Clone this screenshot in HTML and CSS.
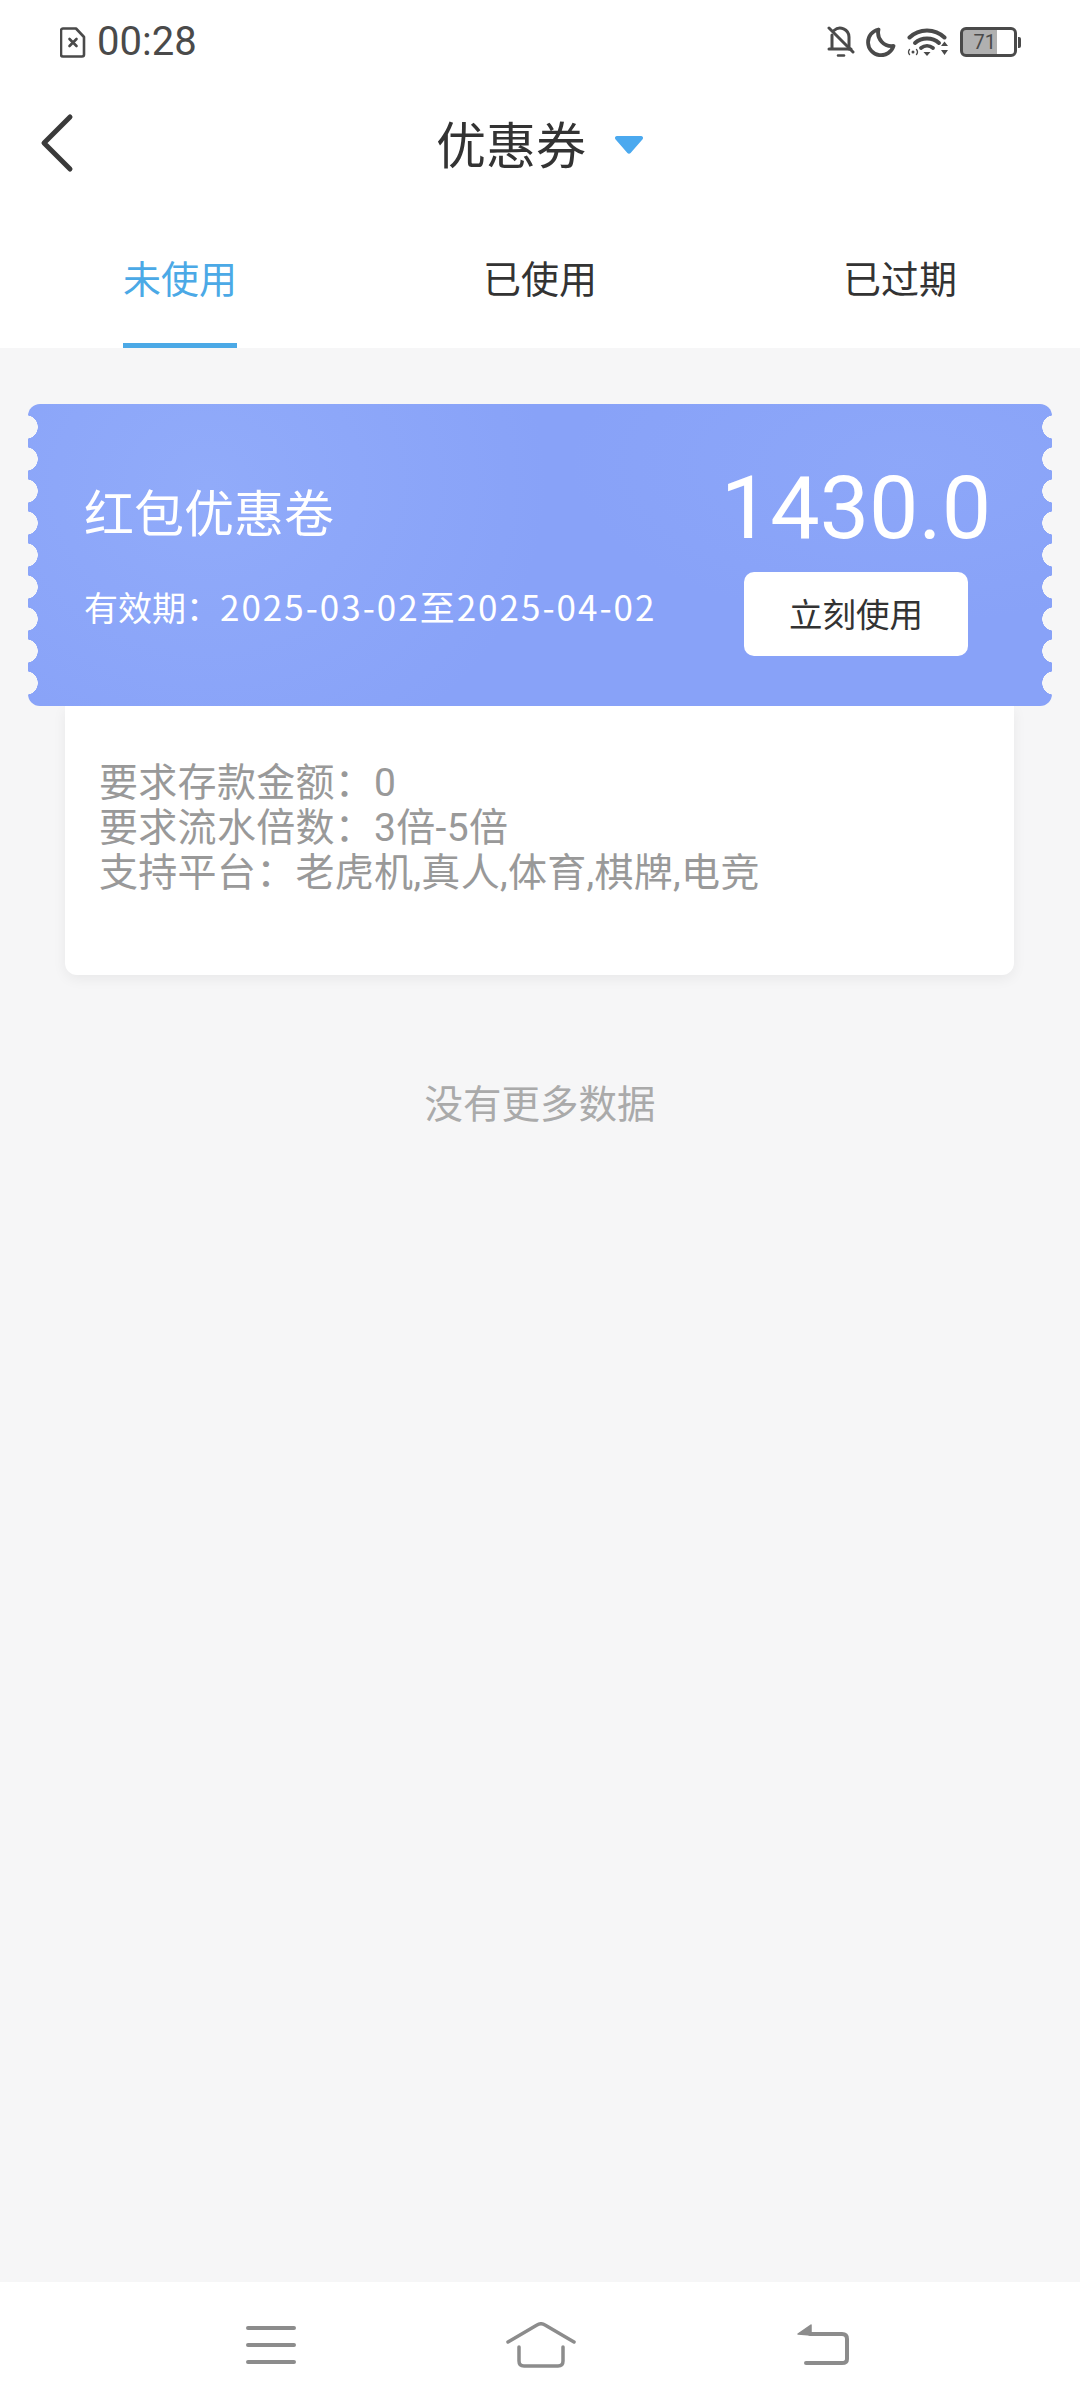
FILE: index.html
```html
<!DOCTYPE html>
<html lang="zh-CN">
<head>
    <meta charset="UTF-8">
    <meta name="viewport" content="width=device-width, initial-scale=1.0">
    <title>优惠券</title>
    <link rel="stylesheet" href="styles.css">
</head>
<body>

<div class="page">
    <div class="status-bar">
        <div class="status-left">
            <svg class="icon-sim" width="26" height="31" viewBox="0 0 26 31" fill="none" stroke="#4a4a4a" stroke-width="2.6" stroke-linejoin="round" stroke-linecap="round">
                <path d="M3 1.5h13l8 8.500v17.500a2 2 0 0 1-2 2H3a2 2 0 0 1-2-2V3.500a2 2 0 0 1 2-2z"/>
                <path d="M9.500 12l7 7M16.500 12l-7 7"/>
            </svg>
            <span class="status-time">00:28</span>
        </div>
        <div class="status-right">
            <svg width="28" height="32" viewBox="0 0 28 32" fill="none" stroke="#4a4a4a" stroke-width="3" stroke-linecap="round" stroke-linejoin="round">
                <path d="M7 4.500A9 9 0 0 1 22 11v12"/>
                <path d="M5 9v14H2h22"/>
                <path d="M2 2l24 24"/>
                <path d="M11 29.500h6" stroke-width="2.500"/>
            </svg>
            <svg width="30" height="30" viewBox="0 0 30 30" fill="none">
                <path d="M12.500 2.500A13 13 0 1 0 27.500 19 A13.500 13.500 0 0 1 12.500 2.500z" stroke="#4a4a4a" stroke-width="3.800" stroke-linejoin="round"/>
            </svg>
            <svg width="42" height="30" viewBox="0 0 42 30" fill="none" stroke="#4a4a4a" stroke-linecap="round">
                <path d="M2.500 10.500C12 1 28 1 37.500 10.500" stroke-width="4"/>
                <path d="M8 16c6.500-6 17.500-6 24 0" stroke-width="4"/>
                <path d="M14 21c3.500-2.800 8.500-2.800 12 0" stroke-width="3.800"/>
                <path d="M16.500 25h7L20 29z" fill="#4a4a4a" stroke="none"/>
                <circle cx="6" cy="25" r="1.500" fill="#4a4a4a" stroke="none"/>
                <path d="M2.500 22.500a4 4 0 0 0 0 5M9.500 22.500a4 4 0 0 1 0 5" stroke-width="1.300"/>
                <path d="M34 19h7l-3.500-4.500zM34 23h7l-3.500 5z" fill="#4a4a4a" stroke="none"/>
            </svg>
            <div class="battery">
                <div class="battery-body">71</div>
                <div class="battery-nub"></div>
            </div>
        </div>
    </div>

    <div class="nav-bar">
        <svg class="nav-back" width="34" height="60" viewBox="0 0 34 60" fill="none" stroke="#3a3a3a" stroke-width="5" stroke-linecap="round" stroke-linejoin="round">
            <path d="M30 4L4 30l26 26"/>
        </svg>
        <div class="nav-title">优惠券</div>
        <svg class="nav-caret" width="30" height="20" viewBox="0 0 30 20">
            <path d="M3 1h24a2 2 0 0 1 1.600 3.200L16.600 18a2 2 0 0 1-3.200 0L1.400 4.200A2 2 0 0 1 3 1z" fill="#4ba9ef"/>
        </svg>
    </div>

    <div class="tabs">
        <div class="tab active">未使用</div>
        <div class="tab">已使用</div>
        <div class="tab">已过期</div>
    </div>

    <div class="content">
        <div class="coupon">
            <div class="coupon-left">
                <div class="coupon-name">红包优惠卷</div>
                <div class="coupon-date">有效期：<span class="date-range">2025-03-02至2025-04-02</span></div>
            </div>
            <div class="coupon-right">
                <div class="coupon-amount">1430.0</div>
                <div class="coupon-button">立刻使用</div>
            </div>
        </div>
        <div class="details">
            <div>要求存款金额：0</div>
            <div>要求流水倍数：3倍-5倍</div>
            <div>支持平台：老虎机,真人,体育,棋牌,电竞</div>
        </div>
        <div class="no-more">没有更多数据</div>
    </div>

    <div class="bottom-nav">
        <svg width="50" height="38" viewBox="0 0 50 38" fill="none" stroke="#8c8c8c" stroke-width="4" stroke-linecap="round">
            <path d="M2 2h46M2 19h46M2 36h46"/>
        </svg>
        <svg width="70" height="46" viewBox="0 0 70 46" fill="none" stroke="#8c8c8c" stroke-width="3.500" stroke-linecap="round" stroke-linejoin="round">
            <path d="M2 20L31 3q4-2.500 8 0l29 17"/>
            <path d="M13 25v14q0 5 5 5h34q5 0 5-5V25"/>
        </svg>
        <svg width="54" height="42" viewBox="0 0 54 42" fill="none" stroke="#8c8c8c" stroke-width="4" stroke-linecap="round" stroke-linejoin="round">
            <path d="M14 10h32q5 0 5 5v20q0 4-5 4H10"/>
            <path d="M2 10L15 1v10z" fill="#8c8c8c" stroke-width="1.500"/>
        </svg>
    </div>
</div>

</body>
</html>
```

FILE: styles.css
```css
* {
    box-sizing: border-box;
}

body {
    margin: 0;
    background: #f6f6f7;
    font-family: "Noto Sans CJK SC", Roboto, sans-serif;
    overflow: hidden;
}

.page {
    width: 1080px;
    height: 2408px;
    display: flex;
    flex-direction: column;
}

/* status bar */
.status-bar {
    height: 84px;
    padding: 26px 59px 0 60px;
    background: #fff;
    display: flex;
    justify-content: space-between;
    align-items: flex-start;
}

.status-left {
    display: flex;
    align-items: center;
    gap: 11px;
}

.status-time {
    font-family: Roboto, sans-serif;
    font-size: 40px;
    line-height: 32px;
    color: #4a4a4a;
}

.status-right {
    display: flex;
    align-items: center;
    gap: 11px;
}

.battery {
    display: flex;
    align-items: center;
    gap: 1px;
}

.battery-body {
    width: 57px;
    height: 30px;
    padding-right: 18px;
    border: 3px solid #4a4a4a;
    border-radius: 6px;
    background: linear-gradient(90deg, #b0b0b0 0, #b0b0b0 66%, #fff 66%);
    font-family: Roboto, sans-serif;
    font-size: 20px;
    line-height: 24px;
    text-align: right;
    color: #4a4a4a;
}

.battery-nub {
    width: 3px;
    height: 11px;
    border-radius: 0 2px 2px 0;
    background: #4a4a4a;
}

/* nav */
.nav-bar {
    height: 122px;
    background: #fff;
    display: flex;
    align-items: center;
    justify-content: center;
    position: relative;
}

.nav-back {
    position: absolute;
    left: 40px;
    top: 29px;
}

.nav-title {
    font-size: 50px;
    color: #333;
    margin-bottom: 6px;
}

.nav-caret {
    margin-left: 28px;
}

/* tabs */
.tabs {
    height: 142px;
    background: #fff;
    display: grid;
    grid-template-columns: repeat(3, 1fr);
}

.tab {
    justify-self: center;
    width: 114px;
    padding-top: 42px;
    font-size: 38px;
    line-height: 58px;
    color: #333;
    white-space: nowrap;
}

.tab.active {
    color: #4ba9e6;
    border-bottom: 5px solid #4ba9e6;
}

/* coupon */
.content {
    flex: 1;
    padding: 56px 28px 0;
}

.coupon {
    position: relative;
    height: 302px;
    padding: 0 84px 0 56px;
    border-radius: 12px;
    background:
        radial-gradient(ellipse 340px 300px at 180px 80px, rgba(156, 182, 252, 0.45), transparent),
        radial-gradient(ellipse 340px 160px at 880px 60px, rgba(150, 176, 250, 0.35), transparent),
        #88a2f8;
    display: flex;
    justify-content: space-between;
    align-items: center;
    overflow: hidden;
}

/* scallops on both edges */
.coupon::before,
.coupon::after {
    content: "";
    position: absolute;
    top: 7px;
    width: 10px;
    height: 288px;
    background-size: 10px 32px;
    background-repeat: repeat-y;
}

.coupon::before {
    left: 0;
    background-image: radial-gradient(circle at -2px 16px, #f6f6f7 11.500px, transparent 12px);
}

.coupon::after {
    right: 0;
    background-image: radial-gradient(circle at 12px 16px, #f6f6f7 11.500px, transparent 12px);
}

.coupon-left {
    color: #fff;
    padding-top: 8px;
}

.coupon-name {
    font-size: 50px;
    line-height: 70px;
    margin-top: -11px;
}

.coupon-date {
    margin-top: 36px;
    font-size: 34px;
    line-height: 50px;
    white-space: nowrap;
}

.date-range {
    font-size: 35px;
    letter-spacing: 2px;
}

.coupon-right {
    display: flex;
    flex-direction: column;
    align-items: center;
    width: 224px;
    padding-top: 4px;
}

.coupon-amount {
    font-family: Roboto, sans-serif;
    font-size: 88px;
    line-height: 100px;
    color: #fff;
    white-space: nowrap;
}

.coupon-button {
    width: 224px;
    height: 84px;
    margin-top: 14px;
    border-radius: 10px;
    background: #fff;
    color: #333;
    font-size: 33.500px;
    line-height: 82px;
    text-align: center;
}

/* details under the coupon */
.details {
    margin: 0 38px 0 37px;
    height: 269px;
    padding: 55px 34px 0;
    border-radius: 0 0 12px 12px;
    background: #fff;
    box-shadow: 0 4px 14px rgba(0, 0, 0, 0.06);
    font-family: Roboto, "Noto Sans CJK SC", sans-serif;
    color: #999;
    font-size: 39px;
    line-height: 45px;
    letter-spacing: 0.300px;
}

.no-more {
    margin-top: 97px;
    font-size: 38.500px;
    line-height: 58px;
    text-align: center;
    color: #aaa;
}

/* system nav */
.bottom-nav {
    height: 126px;
    padding-left: 246px;
    background: #fff;
    display: flex;
    align-items: center;
    gap: 210px;
}

.bottom-nav svg:last-child {
    margin-left: 10px;
}
```
